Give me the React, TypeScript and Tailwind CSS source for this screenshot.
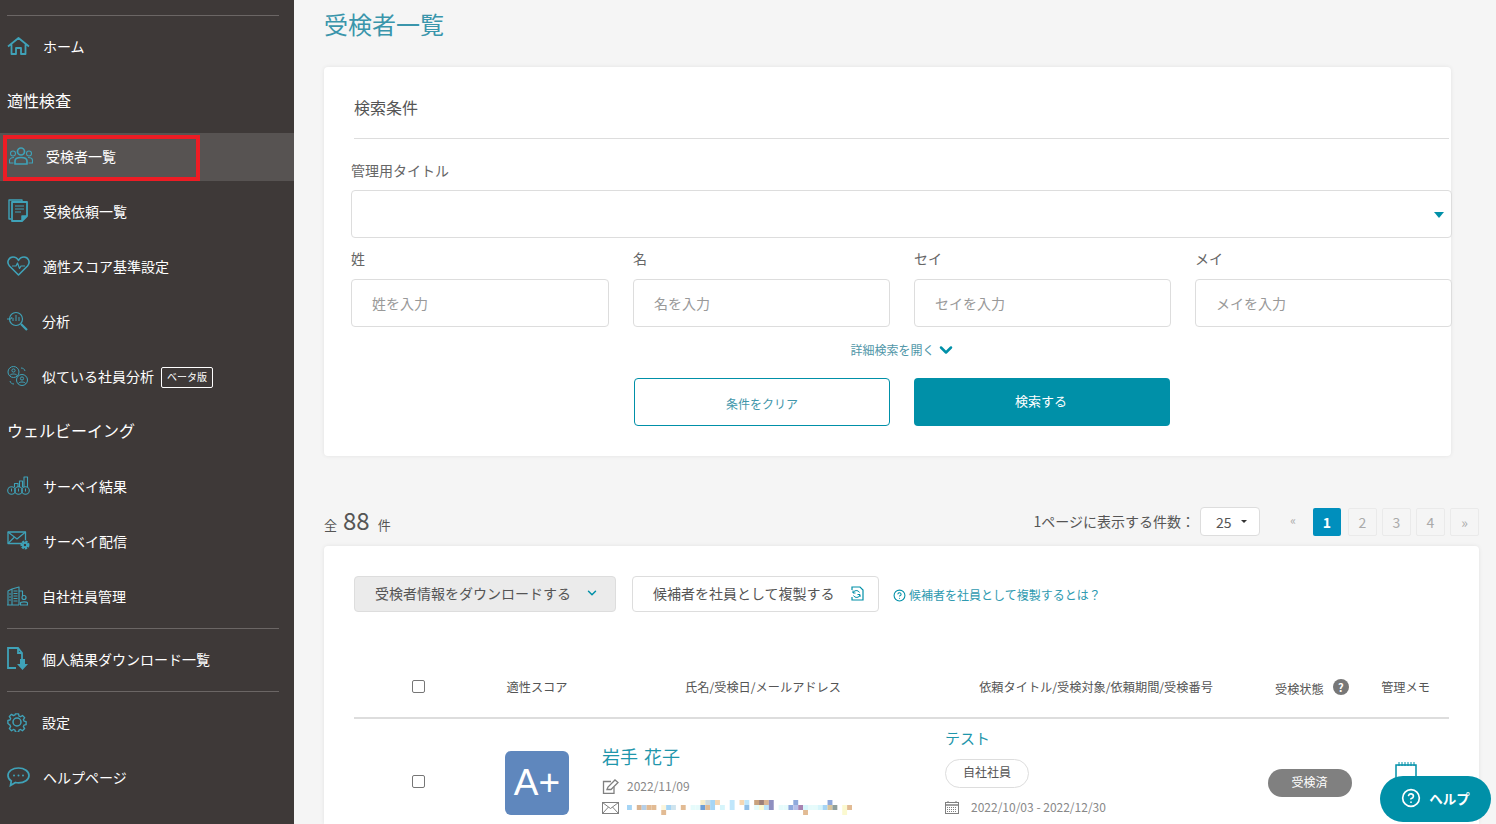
import { ChevronDown, CircleHelp } from "lucide-react";
import type { ReactNode } from "react";

const TEAL = "#3fa2b8";

function Svg({ children, w = 24, h = 24 }: { children: ReactNode; w?: number; h?: number }) {
  return (
    <svg width={w} height={h} viewBox={`0 0 ${w} ${h}`} fill="none" stroke={TEAL} strokeWidth="1.5" strokeLinejoin="round">
      {children}
    </svg>
  );
}

const HomeIcon = () => (
  <Svg w={23} h={18}>
    <path d="M1 9.5 11.5 1 22 9.5M4.5 7.5V17H9v-6h5v6h4.5V7.5" strokeWidth="1.8" />
  </Svg>
);
const UsersIcon = () => (
  <Svg w={24} h={18}>
    <circle cx="12" cy="4.5" r="3.5" strokeWidth="1.7" />
    <circle cx="4" cy="6.5" r="2.5" strokeWidth="1.1" />
    <circle cx="20" cy="6.5" r="2.5" strokeWidth="1.1" />
    <path d="M6 17v-3c0-2 2-3.5 6-3.5s6 1.5 6 3.5v3Z" strokeWidth="1.7" />
    <path d="M5 10.5c-3 0-4.500 1.300-4.500 3V16h4M19 10.500c3 0 4.500 1.300 4.500 3V16h-4" strokeWidth="1.100" />
  </Svg>
);
const DocsIcon = () => (
  <Svg w={20} h={23}>
    <path d="M3 20H1V1h13v1" strokeWidth="1.4" />
    <path d="M4 3h15v14l-5 5H4Z" strokeWidth="1.8" />
    <path d="M7 7h9M7 10h9M7 13h6" strokeWidth="1.2" />
    <path d="M14 22v-5h5" fill={TEAL} />
  </Svg>
);
const HeartIcon = () => (
  <Svg w={23} h={20}>
    <path d="M11.500 19 2.500 10C-1 6 2 1 6 1c2.500 0 4.500 1.500 5.500 3.500C12.500 2.500 14.500 1 17 1c4 0 7 5 3.500 9Z" strokeWidth="1.600" />
    <path d="M5 10h4l1.500-3 2 5.500 1.500-2.500h4" strokeWidth="1.200" />
  </Svg>
);
const AnalysisIcon = () => (
  <Svg w={21} h={20}>
    <circle cx="9" cy="8" r="6.500" strokeWidth="1.200" />
    <path d="M14 13l6 6" strokeWidth="2.200" />
    <path d="M0 8h4l1-2M6 10V7M9 10V4M12 10V6" strokeWidth="1" />
  </Svg>
);
const SimilarIcon = () => (
  <Svg w={21} h={20}>
    <circle cx="6.500" cy="6" r="5.500" strokeWidth="1" />
    <circle cx="6.500" cy="4.500" r="1.600" strokeWidth="1" />
    <path d="M3 9.500c.5-2 6.500-2 7 0" strokeWidth="1" />
    <circle cx="15" cy="14" r="5.500" strokeWidth="1" />
    <circle cx="15" cy="12.500" r="1.600" strokeWidth="1" />
    <path d="M11.500 17.500c.5-2 6.500-2 7 0" strokeWidth="1" />
    <path d="M14 2c2 0 3.500 1 4 3M7 18c-2 0-3.500-1-4-3" strokeWidth="1" />
  </Svg>
);
const ChartIcon = () => (
  <Svg w={23} h={19}>
    <path d="M7.500 11V7.500H11V11M12.500 11V5h3v6M17 11V1h3.500v10" strokeWidth="1.100" />
    <circle cx="4.500" cy="14.500" r="3.800" strokeWidth="1.100" />
    <circle cx="11.500" cy="14.500" r="3.800" strokeWidth="1.100" />
    <circle cx="18.500" cy="14.500" r="3.800" strokeWidth="1.100" />
    <path d="M4.500 12.500v3M11.500 12.500v3M18.500 12.500v3" strokeWidth="1" />
  </Svg>
);
const MailGearIcon = () => (
  <Svg w={23} h={19}>
    <path d="M15 12.500H1V1h17.500v8" strokeWidth="1.300" />
    <path d="m1 1 9 7 8.500-7M1 12.500l6-6M15 8" strokeWidth="1.200" />
    <circle cx="18" cy="14" r="3" strokeWidth="3" strokeDasharray="2 .8" />
    <circle cx="18" cy="14" r="2.200" strokeWidth="1.800" />
  </Svg>
);
const BuildingIcon = () => (
  <Svg w={21} h={20}>
    <path d="M1 19V5l4-2v16M5 19V3l7-2v18M12 5h3.500v5" strokeWidth="1.100" />
    <path d="M6.500 5h4M6.500 7.500h4M6.500 10h4M6.500 12.500h4M6.500 15h4M2 8h2M2 11h2M2 14h2M0 19h12" strokeWidth="1" />
    <circle cx="17" cy="11.500" r="2" strokeWidth="1.200" />
    <path d="M13.500 19v-2c0-1.500 7-1.500 7 0v2Z" strokeWidth="1.200" />
  </Svg>
);
const FileDownIcon = () => (
  <svg width="22" height="24" viewBox="0 0 22 24" fill="none" stroke={TEAL}>
    <path d="M9 21H1V1h10l4 5v6M11 1v5h4" strokeWidth="1.800" />
    <path d="M13 12h5v5h3l-5.500 6L10 17h3Z" fill={TEAL} stroke="none" />
  </svg>
);
const GearIcon = () => (
  <Svg w={20} h={20}>
    <circle cx="10" cy="10" r="4" />
    <path d="M8.300 1h3.400l.5 2.500 1.700.7 2.100-1.400 2.400 2.400-1.400 2.100.7 1.700 2.300.5v3.400l-2.300.5-.7 1.700 1.400 2.100-2.400 2.400-2.100-1.400-1.700.7-.5 2.300H8.300l-.5-2.300-1.700-.7-2.100 1.400-2.400-2.400 1.400-2.100-.7-1.700L0 11.700V8.300l2.300-.5.700-1.700-1.400-2.100L4 1.600l2.100 1.400 1.700-.7Z" transform="translate(.9 .9) scale(.91)" strokeWidth="1.500" />
  </Svg>
);
const ChatIcon = () => (
  <svg width="23" height="20" viewBox="0 0 23 20" fill="none" stroke={TEAL}>
    <path d="M11.500 1C5.500 1 1 4.200 1 8.500c0 2.300 1.300 4.200 3.300 5.500L3.500 18.500l5-3c1 .2 2 .3 3 .3 6 0 10.500-3.200 10.500-7.300S17.500 1 11.500 1Z" strokeWidth="1.700" />
    <circle cx="7" cy="8.500" r="1" fill={TEAL} stroke="none" />
    <circle cx="11.500" cy="8.500" r="1" fill={TEAL} stroke="none" />
    <circle cx="16" cy="8.500" r="1" fill={TEAL} stroke="none" />
  </svg>
);

function NavItem({ icon, label, box, children, className = "h-[55px]" }: { icon: ReactNode; label: string; box: string; children?: ReactNode; className?: string }) {
  return (
    <div className={`flex items-center pb-[2px] pl-[7px] text-sm text-white ${className}`}>
      <span className={`flex shrink-0 items-center ${box}`}>{icon}</span>
      <span>{label}</span>
      {children}
    </div>
  );
}

function SectionTitle({ children, className = "h-[54px]" }: { children: ReactNode; className?: string }) {
  return <div className={`flex items-center pl-[7px] text-base text-white ${className}`}>{children}</div>;
}

function Sidebar() {
  return (
    <aside className="relative h-[824px] w-[294px] shrink-0 bg-[#3e3938] pt-[15px]">
      <div className="ml-[7px] h-px w-[272px] bg-[#6b6665]" />
      <NavItem icon={<HomeIcon />} label="ホーム" box="w-[36px]" className="mt-[3px] h-[55px]" />
      <SectionTitle className="h-[54px] pb-[2px]">適性検査</SectionTitle>
      <div className="mt-[5px]">
        <NavItem icon={<UsersIcon />} label="受検者一覧" box="w-[39px] pl-[2px]" className="h-[48px] bg-[#575352]" />
      </div>
      <div className="mt-[3px]">
        <NavItem icon={<DocsIcon />} label="受検依頼一覧" box="w-[36px] pl-[1px]" />
      </div>
      <NavItem icon={<HeartIcon />} label="適性スコア基準設定" box="w-[36px]" />
      <NavItem icon={<AnalysisIcon />} label="分析" box="w-[35px]" />
      <NavItem icon={<SimilarIcon />} label="似ている社員分析" box="w-[35px]">
        <span className="ml-[7px] mt-[3px] flex h-[21px] w-[52px] items-center justify-center rounded-[2px] border border-white text-[10px]">ベータ版</span>
      </NavItem>
      <SectionTitle className="h-[55px] pb-[4px]">ウェルビーイング</SectionTitle>
      <NavItem icon={<ChartIcon />} label="サーベイ結果" box="w-[36px]" />
      <NavItem icon={<MailGearIcon />} label="サーベイ配信" box="w-[36px]" />
      <NavItem icon={<BuildingIcon />} label="自社社員管理" box="w-[35px]" />
      <div className="ml-[7px] mt-[4px] h-px w-[272px] bg-[#6b6665]" />
      <NavItem icon={<FileDownIcon />} label="個人結果ダウンロード一覧" box="w-[35px]" className="h-[62px]" />
      <div className="ml-[7px] h-px w-[272px] bg-[#6b6665]" />
      <NavItem icon={<GearIcon />} label="設定" box="w-[35px]" className="h-[62px]" />
      <NavItem icon={<ChatIcon />} label="ヘルプページ" box="w-[36px]" className="mt-[-7px] h-[62px]" />
      {/* annotation drawn over the screenshot */}
      <div className="absolute left-[3px] top-[135px] h-[46px] w-[197px] border-4 border-[#ed1c24]" />
    </aside>
  );
}

function Field({ label, placeholder }: { label: string; placeholder: string }) {
  return (
    <div>
      <div className="flex h-[41px] items-start pt-[10px] text-sm leading-5 text-[#666]">{label}</div>
      <div className="flex h-[48px] items-center rounded border border-[#ddd] bg-white pl-[20px] text-sm text-[#999]">{placeholder}</div>
    </div>
  );
}

function SearchCard() {
  return (
    <section className="w-[1127px] rounded bg-white pb-[30px] pl-[27px] pt-[30px] shadow-[0_0_4px_rgba(0,0,0,0.08)]">
      <div className="w-[1098px]">
        <div className="ml-[3px] flex h-[42px] w-[1095px] items-start border-b border-[#ddd] text-base leading-5 text-[#555]">検索条件</div>
        <div className="flex h-[51px] items-end pb-[10px] text-sm leading-5 text-[#666]">管理用タイトル</div>
        <div className="relative h-[48px] w-[1101px] rounded border border-[#ddd] bg-white">
          <span className="absolute right-[7px] top-[21px] h-0 w-0 border-x-[5px] border-t-[6px] border-x-transparent border-t-[#0090a8]" />
        </div>
        <div className="grid w-[1101px] grid-cols-[258px_257px_257px_257px] gap-x-[24px]">
          <Field label="姓" placeholder="姓を入力" />
          <Field label="名" placeholder="名を入力" />
          <Field label="セイ" placeholder="セイを入力" />
          <Field label="メイ" placeholder="メイを入力" />
        </div>
        <div className="flex h-[51px] w-[1101px] items-center justify-center pb-[5px] pl-[3px] text-xs text-[#4f96a8]">
          詳細検索を開く
          <ChevronDown size={20} strokeWidth={3} className="ml-[1px] text-[#0090a8]" />
        </div>
        <div className="ml-[283px] flex gap-[24px]">
          <button className="h-[48px] w-[256px] rounded border border-[#0090a8] bg-white pt-[3px] text-xs text-[#3f96aa]">条件をクリア</button>
          <button className="h-[48px] w-[256px] rounded bg-[#0090a8] pb-[2px] pr-[2px] text-[13px] text-white">検索する</button>
        </div>
      </div>
    </section>
  );
}

function Pager() {
  return (
    <div className="flex items-center">
      <span className="mr-[5px] pb-[2px] text-sm text-[#555]">1ページに表示する件数：</span>
      <div className="relative flex h-[29px] w-[60px] items-center rounded border border-[#ddd] bg-white pl-[15px] text-sm text-[#555]">
        25
        <span className="absolute right-[12px] top-[12px] h-0 w-0 border-x-[3px] border-t-[3px] border-x-transparent border-t-[#333]" />
      </div>
      <span className="ml-[18px] flex h-[28px] w-[30px] items-center justify-center pb-[3px] text-xs text-[#aaa]">«</span>
      <div className="ml-[5px] flex gap-[5px] text-sm">
        <span className="mr-[2px] flex h-[28px] w-[28px] items-center justify-center rounded-[2px] bg-[#008fbd] font-bold text-white">1</span>
        {["2", "3", "4", "»"].map((p) => (
          <span key={p} className="flex h-[28px] w-[29px] items-center justify-center rounded-[2px] border border-[#eaeaea] text-[#aaa]">{p}</span>
        ))}
      </div>
    </div>
  );
}

// blurred-out mail address
const MOSAIC: [number, number, string][] = [
  [0, 1, "#a6d5f5"], [2, 1, "#d9b492"], [3, 1, "#b5cfe8"], [4, 1, "#e2bb94"], [5, 1, "#e2bb94"],
  [7, 1, "#fbf5dc"], [8, 1, "#a6d5f5"], [9, 1, "#cfe4ee"], [11, 1, "#e2bb94"], [7, 2, "#e2bb94"],
  [13, 1, "#e6fbfb"], [14, 1, "#e6fbfb"], [15, 1, "#6f9fd6"], [16, 1, "#e2bb94"], [17, 1, "#a6d5f5"],
  [15, 0, "#f7eecb"], [16, 0, "#cfdce0"], [17, 0, "#a6d5f5"], [18, 0, "#f5d7b3"], [19, 1, "#d6f5fb"],
  [21, 0, "#bfe6fb"], [21, 1, "#bfe6fb"], [23, 0, "#f5d7b3"], [24, 0, "#bfe6fb"], [24, 1, "#8fbfe8"],
  [26, 0, "#c9a27d"], [27, 0, "#9c7f78"], [28, 0, "#d9b492"], [29, 0, "#8f8fc0"], [26, 1, "#e6fbfb"],
  [27, 1, "#fbf9d0"], [28, 1, "#bfe6fb"], [29, 1, "#8f8fc0"], [31, 1, "#e6fbfb"], [32, 1, "#e6fbfb"],
  [33, 1, "#8fa9dc"], [34, 0, "#8fa9dc"], [34, 1, "#b5bfe8"], [35, 1, "#a783b0"], [36, 1, "#d6f5fb"],
  [37, 1, "#e6fbfb"], [36, 2, "#e2bb94"], [38, 1, "#e6fbfb"], [39, 1, "#d6f5fb"], [40, 1, "#a6d5f5"],
  [41, 1, "#d9c49c"], [41, 0, "#8fa9dc"], [42, 1, "#8f9f9c"], [44, 1, "#fbf9d0"], [44, 2, "#fbf9d0"], [45, 1, "#e2bb94"],
];

function Mosaic() {
  return (
    <svg width="225" height="15" viewBox="0 0 230 15" preserveAspectRatio="none" className="block">
      {MOSAIC.map(([c, r, fill]) => (
        <rect key={`${c}-${r}`} x={c * 5} y={r * 5} width="5" height="5" fill={fill} />
      ))}
    </svg>
  );
}

const Checkbox = () => <span className="block h-[13px] w-[13px] rounded-[2px] border border-[#767676] bg-white" />;

function EditIcon() {
  return (
    <svg width="18" height="15" viewBox="0 0 18 15" fill="none" stroke="#808080" strokeWidth="1.300">
      <path d="M9 2.500H1.500v12h10.500V8" />
      <path d="M5 10.500 6 8l7-7 3 2.500-7 7Z" fill="#fff" />
    </svg>
  );
}
function MailIcon() {
  return (
    <svg width="17" height="12" viewBox="0 0 17 12" fill="none" stroke="#808080" strokeWidth="1">
      <rect x=".5" y=".5" width="16" height="11" />
      <path d="m.5.5 8 6 8-6M.5 11.500l6-6.500M16.500 11.500l-6-6.500" />
    </svg>
  );
}
function CalendarIcon() {
  return (
    <svg width="14" height="13" viewBox="0 0 14 13" fill="none" stroke="#808080">
      <rect x=".5" y="1.500" width="13" height="11" />
      <path d="M0 4h14" strokeWidth="1.500" />
      <path d="M3 0v2M11 0v2" />
      <path d="M2 6.500h10M2 8.500h10M2 10.500h10" strokeDasharray="1 1" />
    </svg>
  );
}
function CopyIcon() {
  return (
    <svg width="14" height="15" viewBox="0 0 14 15" fill="none" stroke="#0090a8" strokeWidth="1.200">
      <path d="M2 4V1h8l3 3v10H2v-3" />
      <path d="M9.500 6.500a3.500 3.500 0 0 0-6.500.500M3.500 9.500a3.500 3.500 0 0 0 6.500-.5M3 4.500V7h2.500M10 11V8.500H7.500" strokeWidth="1" />
    </svg>
  );
}
function MemoIcon() {
  return (
    <svg width="24" height="26" viewBox="0 0 24 26" fill="none" stroke="#0090a8" strokeWidth="1.500">
      <path d="M1 3h20v13l-6 8H1Z" />
      <path d="M4 0v4M7 0v4M10 0v4M13 0v4M16 0v4M19 0v4" strokeWidth="1" />
    </svg>
  );
}

function ResultCard() {
  return (
    <section className="mt-[10px] h-[278px] w-[1155px] rounded-t bg-white pl-[30px] pt-[30px] shadow-[0_0_4px_rgba(0,0,0,0.08)]">
      <div className="flex items-center">
        <button className="flex h-[36px] w-[262px] items-center rounded border border-[#ddd] bg-[#ebebeb] pb-[2px] pl-[20px] text-sm text-[#555]">
          受検者情報をダウンロードする
          <ChevronDown size={14} strokeWidth={2.500} className="ml-[14px] text-[#0090a8]" />
        </button>
        <button className="ml-[16px] flex h-[36px] w-[247px] items-center rounded border border-[#ddd] bg-white pb-[2px] pl-[20px] text-sm text-[#555]">
          候補者を社員として複製する
          <span className="ml-[15px]"><CopyIcon /></span>
        </button>
        <CircleHelp size={13} strokeWidth={2} className="ml-[14px] mt-[2px] text-[#0090a8]" />
        <span className="ml-[3px] pt-[2px] text-xs text-[#2f9ab0]">候補者を社員として複製するとは？</span>
      </div>
      <div className="mt-[46px] grid h-[61px] w-[1095px] grid-cols-[129px_108px_344px_322px_105px_87px] items-center border-b-2 border-[#ddd] text-center text-[12.2px] text-[#555]">
        <div className="flex justify-center pb-[2px] pr-[1px]"><Checkbox /></div>
        <div>適性スコア</div>
        <div>氏名/受検日/メールアドレス</div>
        <div>依頼タイトル/受検対象/依頼期間/受検番号</div>
        <div className="flex items-center pl-[18px]">
          <span className="pt-[3px]">受検状態</span>
          <span className="ml-[9px] flex h-[16px] w-[16px] items-center justify-center rounded-full bg-[#777] text-[11px] font-bold text-white">?</span>
        </div>
        <div>管理メモ</div>
      </div>
      <div className="grid w-[1095px] grid-cols-[129px_108px_344px_322px_105px_87px]">
        <div className="flex justify-center pr-[1px] pt-[56px]"><Checkbox /></div>
        <div className="flex justify-center pt-[32px]">
          <div className="flex h-[64px] w-[64px] items-center justify-center rounded-md bg-[#5f87bd] font-['Liberation_Sans',sans-serif] text-[37px] text-white">A+</div>
        </div>
        <div className="pl-[11px] pt-[25px]">
          <div className="text-lg leading-6 text-[#1f96ab] [word-spacing:2px]">岩手 花子</div>
          <div className="mt-[9px] flex h-[18px] items-center text-xs text-[#888]">
            <EditIcon />
            <span className="ml-[7px]">2022/11/09</span>
          </div>
          <div className="mt-[5px] flex h-[15px] items-center">
            <MailIcon />
            <span className="ml-[8px]"><Mosaic /></span>
          </div>
        </div>
        <div className="pl-[10px] pt-[9px]">
          <div className="text-[15px] leading-5 text-[#1f96ab]">テスト</div>
          <div className="mt-[11px] flex h-[29px] w-[84px] items-center justify-center rounded-full border border-[#ddd] pb-[3px] text-xs text-[#555]">自社社員</div>
          <div className="mt-[11px] flex items-center text-xs text-[#888]">
            <CalendarIcon />
            <span className="ml-[12px]">2022/10/03 - 2022/12/30</span>
          </div>
        </div>
        <div className="flex justify-center pt-[50px]">
          <span className="flex h-[28px] w-[84px] items-center justify-center rounded-full bg-[#808080] pb-[3px] text-xs text-white">受検済</span>
        </div>
        <div className="pl-[33px] pt-[43px]"><MemoIcon /></div>
      </div>
    </section>
  );
}

export default function App() {
  return (
    <div className="relative flex h-[824px] overflow-hidden bg-[#f5f5f5] font-['Noto_Sans_CJK_JP','Noto_Sans',sans-serif]">
      <Sidebar />
      <main className="pl-[30px]">
        <h1 className="flex h-[48px] items-center text-2xl text-[#3a95ab]">受検者一覧</h1>
        <div className="mt-[19px]"><SearchCard /></div>
        <div className="mt-[51px] flex h-[29px] w-[1155px] items-center justify-between">
          <div className="flex items-baseline pb-[1px] text-[13px] text-[#555]">
            全<span className="ml-[6px] mr-[8px] text-2xl leading-none">88</span>件
          </div>
          <Pager />
        </div>
        <ResultCard />
      </main>
      <button className="absolute left-[1380px] top-[776px] flex h-[46px] w-[111px] items-center justify-center gap-[8px] rounded-[23px] bg-[#0090a8] pb-[2px] text-[13.5px] font-bold text-white">
        <CircleHelp size={20} strokeWidth={2} />
        ヘルプ
      </button>
    </div>
  );
}
